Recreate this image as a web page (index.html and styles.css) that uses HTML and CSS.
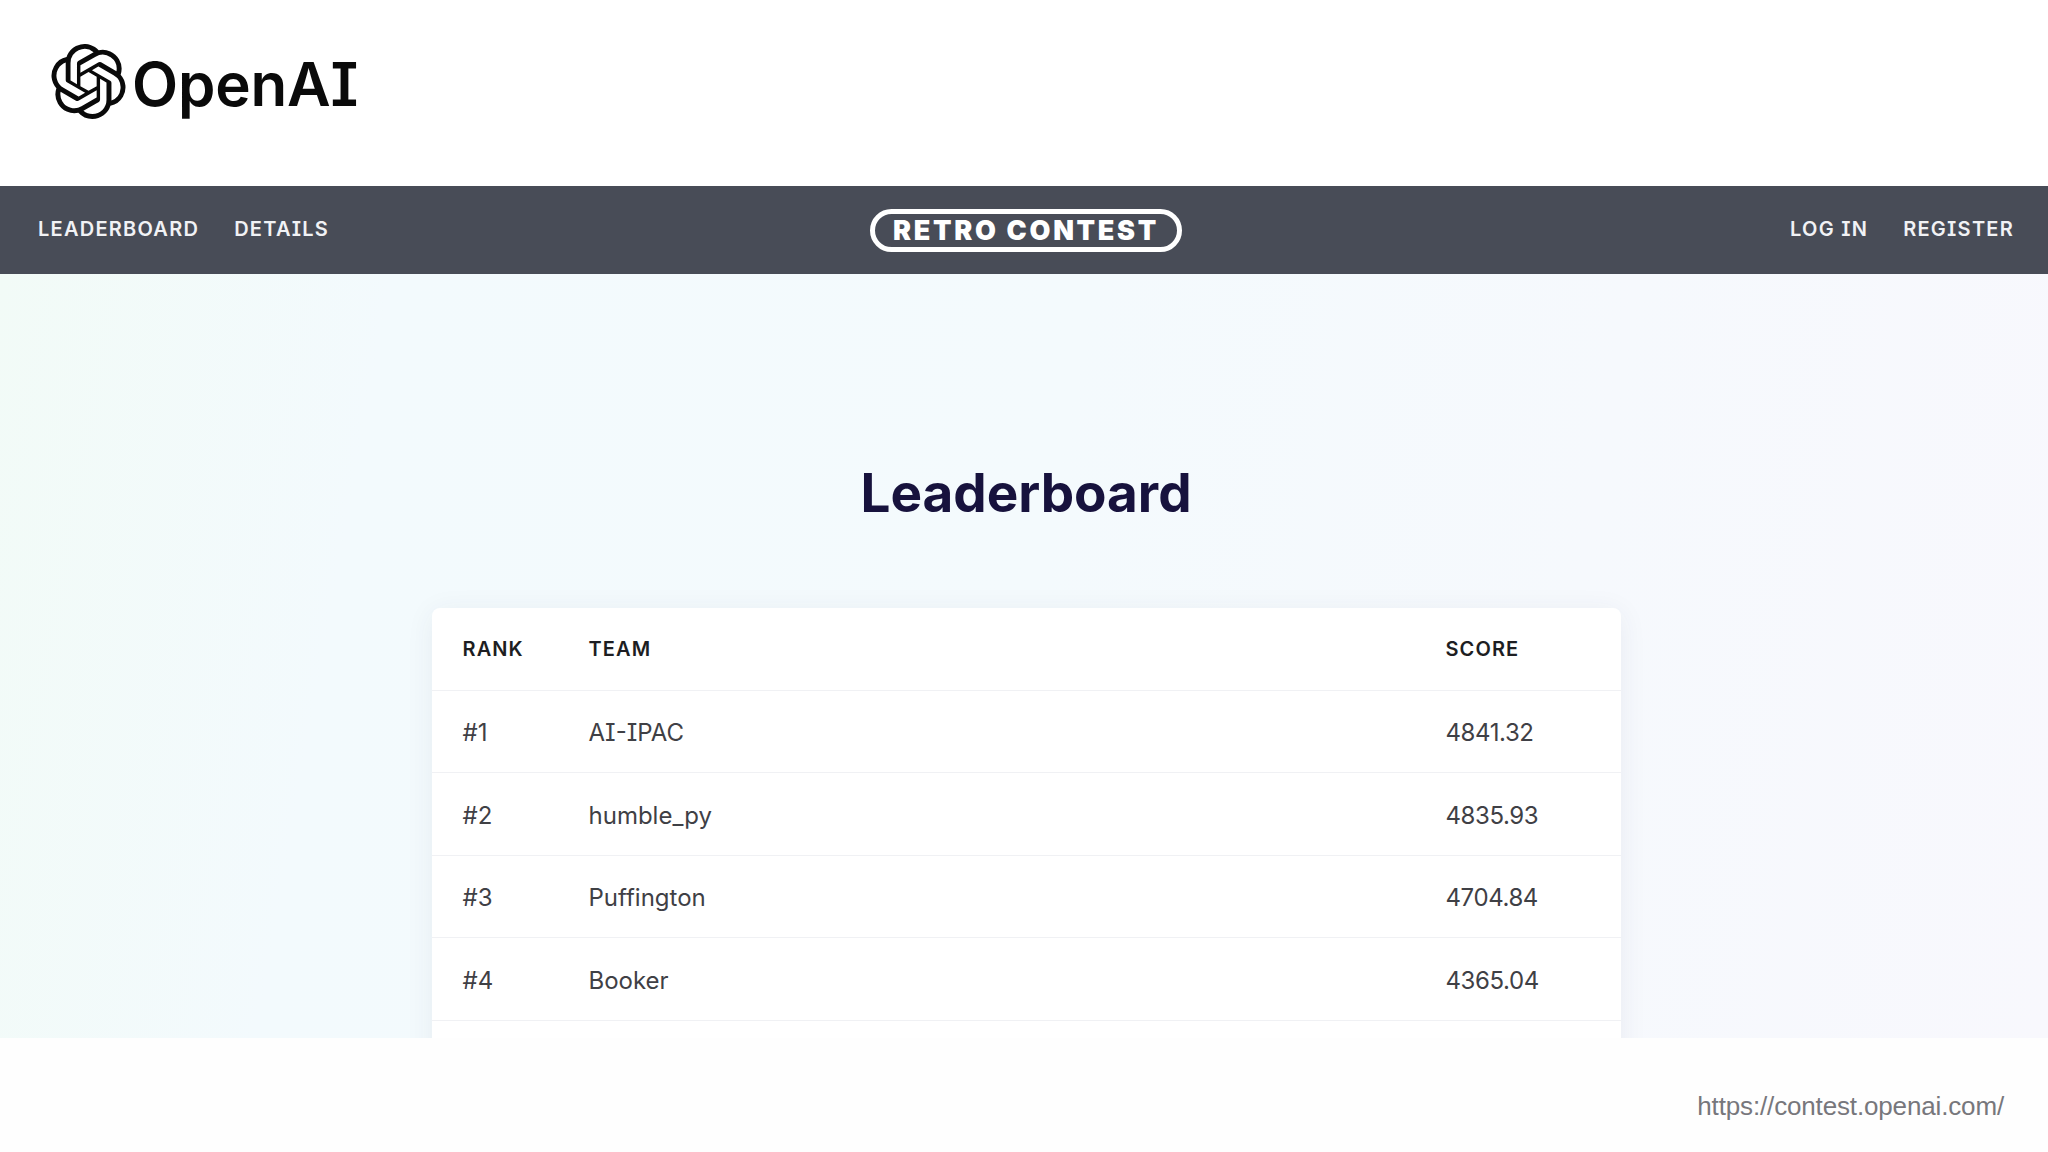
FILE: index.html
```html
<!DOCTYPE html>
<html lang="en">
<head>
    <meta charset="UTF-8">
    <title>Retro Contest Leaderboard</title>
    <link rel="stylesheet" href="styles.css">
</head>
<body>
    <!-- Slide header with the logo -->
    <header class="brand">
        <svg class="brand-mark" viewBox="0 0 24 24" aria-hidden="true">
            <path d="M22.2819 9.8211a5.9847 5.9847 0 0 0-.5157-4.9108 6.0462 6.0462 0 0 0-6.5098-2.9A6.0651 6.0651 0 0 0 4.9807 4.1818a5.9847 5.9847 0 0 0-3.9977 2.9 6.0462 6.0462 0 0 0 .7427 7.0966 5.98 5.98 0 0 0 .511 4.9107 6.051 6.051 0 0 0 6.5146 2.9001A5.9847 5.9847 0 0 0 13.2599 24a6.0557 6.0557 0 0 0 5.7718-4.2058 5.9894 5.9894 0 0 0 3.9977-2.9001 6.0557 6.0557 0 0 0-.7475-7.0729zm-9.022 12.6081a4.4755 4.4755 0 0 1-2.8764-1.0408l.1419-.0804 4.7783-2.7582a.7948.7948 0 0 0 .3927-.6813v-6.7369l2.02 1.1686a.071.071 0 0 1 .038.052v5.5826a4.504 4.504 0 0 1-4.4945 4.4944zm-9.6607-4.1254a4.4708 4.4708 0 0 1-.5346-3.0137l.142.0852 4.783 2.7582a.7712.7712 0 0 0 .7806 0l5.8428-3.3685v2.3324a.0804.0804 0 0 1-.0332.0615L9.74 19.9502a4.4992 4.4992 0 0 1-6.1408-1.6464zM2.3408 7.8956a4.485 4.485 0 0 1 2.3655-1.9728V11.6a.7664.7664 0 0 0 .3879.6765l5.8144 3.3543-2.0201 1.1685a.0757.0757 0 0 1-.071 0l-4.8303-2.7865A4.504 4.504 0 0 1 2.3408 7.872zm16.5963 3.8558L13.1038 8.364 15.1192 7.2a.0757.0757 0 0 1 .071 0l4.8303 2.7913a4.4944 4.4944 0 0 1-.6765 8.1042v-5.6772a.79.79 0 0 0-.407-.667zm2.0107-3.0231l-.142-.0852-4.7735-2.7818a.7759.7759 0 0 0-.7854 0L9.409 9.2297V6.8974a.0662.0662 0 0 1 .0284-.0615l4.8303-2.7866a4.4992 4.4992 0 0 1 6.6802 4.66zM8.3065 12.863l-2.02-1.1638a.0804.0804 0 0 1-.038-.0567V6.0742a4.4992 4.4992 0 0 1 7.3757-3.4537l-.142.0805L8.704 5.459a.7948.7948 0 0 0-.3927.6813zm1.0976-2.3654l2.602-1.4998 2.6069 1.4998v2.9994l-2.5974 1.4997-2.6067-1.4997Z"/>
        </svg>
        <span class="brand-name">OpenAI</span>
    </header>

    <!-- Contest site nav -->
    <nav class="topnav">
        <div class="nav-links">
            <a>LEADERBOARD</a>
            <a>DETAILS</a>
        </div>
        <div class="contest-logo">RETRO CONTEST</div>
        <div class="nav-links">
            <a>LOG IN</a>
            <a>REGISTER</a>
        </div>
    </nav>

    <main class="content">
        <h1 class="title">Leaderboard</h1>
        <table class="board">
            <thead>
                <tr>
                    <th class="col-rank">RANK</th>
                    <th class="col-team">TEAM</th>
                    <th>SCORE</th>
                </tr>
            </thead>
            <tbody>
                <tr><td>#1</td><td>AI-IPAC</td><td>4841.32</td></tr>
                <tr><td>#2</td><td>humble_py</td><td>4835.93</td></tr>
                <tr><td>#3</td><td>Puffington</td><td>4704.84</td></tr>
                <tr><td>#4</td><td>Booker</td><td>4365.04</td></tr>
                <tr><td></td><td></td><td></td></tr>
            </tbody>
        </table>
    </main>

    <footer class="source">https://contest.openai.com/</footer>
</body>
</html>
```

FILE: styles.css
```css
html, body {
    margin: 0;
    height: 100%;
}
body {
    display: flex;
    flex-direction: column;
    height: 1152px;
    overflow: hidden;
    background-color: #fff;
    font-family: 'Inter', sans-serif;
    font-feature-settings: "cv08"; /* serif capital I */
}
.brand {
    display: flex;
    align-items: center;
    gap: 6px;
    height: 186px;
    padding: 0 0 24px 51px;
    box-sizing: border-box;
}
.brand-mark {
    width: 75px;
    height: 75px;
    fill: #0a0a0a;
}
.brand-name {
    margin-top: 5px;
    font-size: 60px;
    font-weight: 600;
    color: #0a0a0a;
    letter-spacing: -0.2px;
}
.topnav {
    display: flex;
    justify-content: space-between;
    align-items: center;
    height: 88px;
    padding: 0 34px 0 38px;
    background-color: #484c57;
    color: #f1f2f5;
}
.nav-links {
    display: flex;
    gap: 35px;
    width: 410px;
    margin-top: -3px;
    font-size: 20px;
    font-weight: 600;
    letter-spacing: 1.25px;
}
.nav-links:last-child {
    justify-content: flex-end;
}
.contest-logo {
    width: 312px;
    height: 43px;
    box-sizing: border-box;
    border: 5px solid #fff;
    border-radius: 22px;
    text-align: center;
    font-size: 27px;
    line-height: 33px;
    font-weight: 900;
    letter-spacing: 2.7px;
    color: #fff;
}
.content {
    display: flex;
    flex-direction: column;
    align-items: center;
    height: 764px;
    padding-left: 4px;
    box-sizing: border-box;
    overflow: hidden;
    background: linear-gradient(100deg, #f2fbf7 0%, #f3fafd 18%, #f4fafd 50%, #f8f8fd 100%);
}
.title {
    flex: none;
    margin: 188px 0 0 0;
    height: 146px;
    font-size: 53px;
    line-height: 63px;
    font-weight: 700;
    color: #17123d;
}
.board {
    flex: none;
    width: 1189px;
    border-collapse: collapse;
    table-layout: fixed;
    background-color: #fff;
    border-radius: 8px;
    box-shadow: 0 4px 28px rgba(60, 60, 90, 0.07);
    color: #3f4045;
}
.board th, .board td {
    height: 81.5px;
    padding: 0;
    text-align: left;
    border-bottom: 1px solid #f0f1f4;
}
.board th {
    font-size: 20px;
    font-weight: 600;
    letter-spacing: 1.1px;
    color: #1d1e22;
}
.board td {
    box-sizing: border-box;
    height: 82.5px;
    padding-top: 3px;
    font-size: 24px;
    font-weight: 400;
}
.board th:first-child, .board td:first-child {
    padding-left: 31px;
}
.board td:last-child {
    letter-spacing: -0.4px;
}
.col-rank {
    width: 126px;
}
.col-team {
    width: 857px;
}
.source {
    flex: 1;
    display: flex;
    justify-content: flex-end;
    align-items: center;
    padding: 22px 44px 0 0;
    background-color: #fefefe;
    font-family: 'Liberation Sans', sans-serif;
    font-size: 26px;
    letter-spacing: -0.15px;
    color: #77777c;
}
```
